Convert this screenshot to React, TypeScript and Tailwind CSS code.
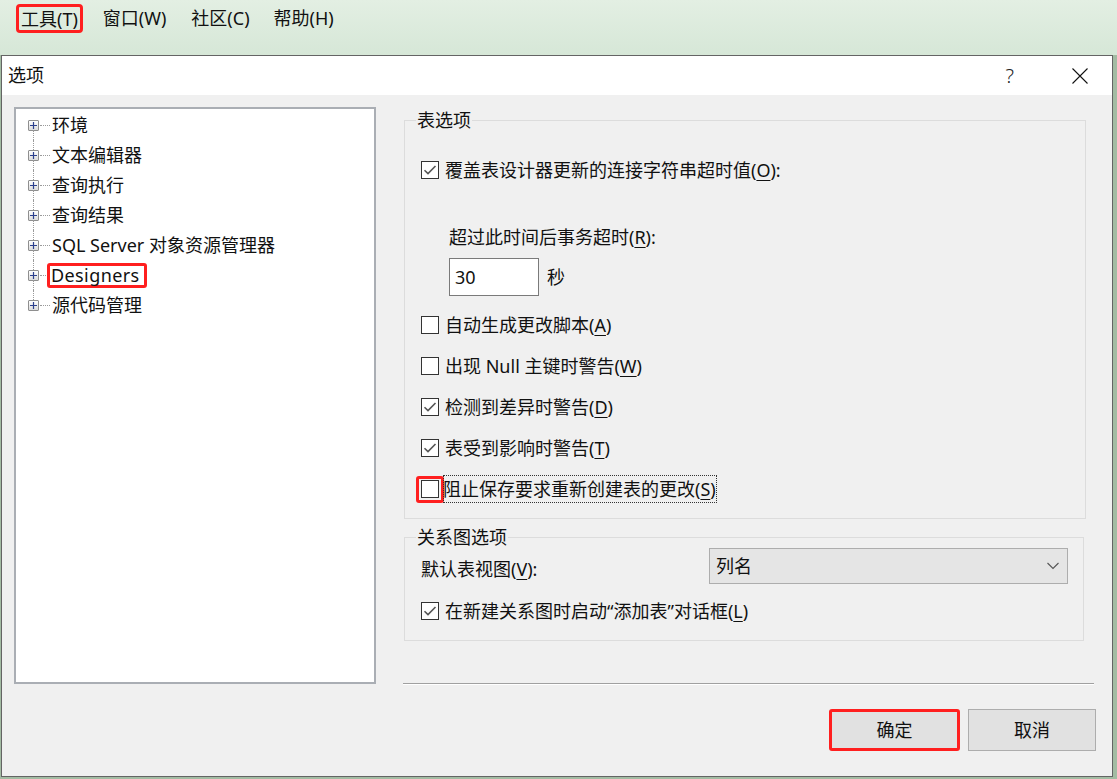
import type { ReactNode } from 'react';

const font = { fontFamily: '"Noto Sans", "Noto Sans CJK SC", sans-serif' };

function Key({ k }: { k: string }) {
    return <span className="underline underline-offset-[3px] decoration-1">{k}</span>;
}

function Check({ on }: { on?: boolean }) {
    return (
        <span className="w-[18px] h-[18px] shrink-0 border border-[#333] bg-white flex items-center justify-center">
            {on && (
                <svg width="14" height="14" viewBox="0 0 14 14">
                    <path d="M1.5 7.2 L5 10.6 L12.5 3" fill="none" stroke="#555" strokeWidth="1.6" />
                </svg>
            )}
        </span>
    );
}

function CheckRow({ on, children, className = '' }: { on?: boolean; children: ReactNode; className?: string }) {
    return (
        <div className={`h-[24px] flex items-center gap-[6px] ${className}`}>
            <Check on={on} />
            <span className="whitespace-nowrap">{children}</span>
        </div>
    );
}

const treeItems = ['环境', '文本编辑器', '查询执行', '查询结果', 'SQL Server 对象资源管理器', 'Designers', '源代码管理'];

function TreeRow({ label, first, last }: { label: string; first: boolean; last: boolean }) {
    return (
        <div className="h-[30px] flex items-center">
            <div className="relative w-[11px] h-[30px] flex items-center">
                {!first && <div className="absolute left-[5px] top-0 h-[10px] border-l border-dotted border-[#9a9a9a]" />}
                {!last && <div className="absolute left-[5px] bottom-0 h-[10px] border-l border-dotted border-[#9a9a9a]" />}
                <div className="w-[11px] h-[11px] border border-[#8f8f8f] rounded-[1px] bg-gradient-to-b from-white to-[#dcdcdc] flex items-center justify-center">
                    <svg width="7" height="7" viewBox="0 0 7 7">
                        <path d="M0 3.5 H7 M3.5 0 V7" stroke="#2b3f8c" strokeWidth="1.2" />
                    </svg>
                </div>
            </div>
            <div className="w-[10px] ml-[1px] border-t border-dotted border-[#9a9a9a]" />
            {label === 'Designers' ? (
                <span className="ml-[-3px] border-[3px] border-[#ff1f1f] rounded-[3px] pl-[1px] pr-[4px] leading-[19px] tracking-[0.4px]">{label}</span>
            ) : (
                <span className="ml-[2px] whitespace-nowrap">{label}</span>
            )}
        </div>
    );
}

export default function App() {
    return (
        <div style={font} className="w-[1117px] h-[779px] overflow-hidden bg-[#a3bca3] text-[18px] text-[#111] flex flex-col">
            {/* menu bar */}
            <div className="h-[55px] bg-gradient-to-b from-[#e3efe3] to-[#d6e7d7] flex items-start pt-[4px] pl-[16px]">
                <div className="h-[29px] px-[2px] border-[3px] border-[#ff1f1f] rounded-[4px] flex items-center leading-none">工具(T)</div>
                <div className="h-[29px] ml-[20px] flex items-center">窗口(W)</div>
                <div className="h-[29px] ml-[25px] flex items-center">社区(C)</div>
                <div className="h-[29px] ml-[24px] flex items-center">帮助(H)</div>
            </div>

            {/* dialog */}
            <div className="ml-[1px] w-[1112px] h-[722px] border border-[#646464] bg-[#f0f0f0] flex flex-col">
                <div className="h-[39px] bg-white flex items-center shrink-0">
                    <span className="ml-[6px]">选项</span>
                    <span className="ml-auto text-[20px] font-light text-[#222]">?</span>
                    <svg className="ml-[58px] mr-[24px]" width="16" height="16" viewBox="0 0 16 16">
                        <path d="M0.5 0.5 L15.5 15.5 M15.5 0.5 L0.5 15.5" stroke="#111" strokeWidth="1.1" />
                    </svg>
                </div>

                <div className="flex">
                    {/* tree */}
                    <div className="ml-[12px] mt-[12px] w-[362px] h-[577px] bg-white border-2 border-[#aaaeb4] pt-[1px] pl-[12px]">
                        {treeItems.map((t, i) => (
                            <TreeRow key={t} label={t} first={i === 0} last={i === treeItems.length - 1} />
                        ))}
                    </div>

                    {/* options */}
                    <div className="ml-[28px] mt-[14px] w-[692px] flex flex-col">
                        <fieldset className="w-[682px] border border-[#dcdcdc] pl-[16px] pb-[17px]">
                            <legend className="ml-[-5px] px-[1px] leading-[22px]">表选项</legend>
                            <CheckRow on className="mt-[27px]">覆盖表设计器更新的连接字符串超时值(<Key k="O" />):</CheckRow>
                            <div className="mt-[43px] ml-[28px] h-[24px] flex items-center">超过此时间后事务超时(<Key k="R" />):</div>
                            <div className="mt-[9px] ml-[28px] flex items-center">
                                <div className="w-[90px] h-[38px] bg-white border border-[#7a7a7a] flex items-center pl-[5px]">30</div>
                                <span className="ml-[8px]">秒</span>
                            </div>
                            <CheckRow className="mt-[17px]">自动生成更改脚本(<Key k="A" />)</CheckRow>
                            <CheckRow className="mt-[17px]">出现 Null 主键时警告(<Key k="W" />)</CheckRow>
                            <CheckRow on className="mt-[17px]">检测到差异时警告(<Key k="D" />)</CheckRow>
                            <CheckRow on className="mt-[17px]">表受到影响时警告(<Key k="T" />)</CheckRow>
                            <div className="mt-[17px] h-[24px] flex items-center">
                                <div className="ml-[-5px] w-[28px] h-[27px] border-[3px] border-[#ff1f1f] rounded-[3px] flex items-center justify-center">
                                    <Check />
                                </div>
                                <span className="ml-[-1px] h-[28px] flex items-center pr-[1px] outline outline-1 outline-dotted outline-[#333] outline-offset-[-1px] whitespace-nowrap">
                                    阻止保存要求重新创建表的更改(<Key k="S" />)
                                </span>
                            </div>
                        </fieldset>

                        <fieldset className="mt-[7px] w-[680px] border border-[#dcdcdc] pl-[16px] pb-[17px]">
                            <legend className="ml-[-5px] px-[1px] leading-[22px]">关系图选项</legend>
                            <div className="flex items-center h-[36px]">
                                <span className="w-[288px] pt-[6px]">默认表视图(<Key k="V" />):</span>
                                <div className="w-[359px] h-[36px] bg-[#e5e5e5] border border-[#adadad] flex items-center pl-[6px] pr-[8px]">
                                    <span>列名</span>
                                    <svg className="ml-auto" width="12" height="8" viewBox="0 0 12 8">
                                        <path d="M0.5 1 L6 6.5 L11.5 1" fill="none" stroke="#555" strokeWidth="1.1" />
                                    </svg>
                                </div>
                            </div>
                            <CheckRow on className="mt-[15px]">在新建关系图时启动“添加表”对话框(<Key k="L" />)</CheckRow>
                        </fieldset>

                        <div className="mt-[42px] ml-[-1px] w-[691px] border-t border-[#a0a0a0] border-b border-b-white" />

                        <div className="mt-[24px] flex justify-end gap-[8px]">
                            <button className="w-[131px] h-[42px] bg-[#e1e1e1] border-[3px] border-[#ff1f1f] rounded-[3px]">确定</button>
                            <button className="w-[128px] h-[42px] bg-[#e1e1e1] border border-[#adadad]">取消</button>
                        </div>
                    </div>
                </div>
            </div>
        </div>
    );
}
